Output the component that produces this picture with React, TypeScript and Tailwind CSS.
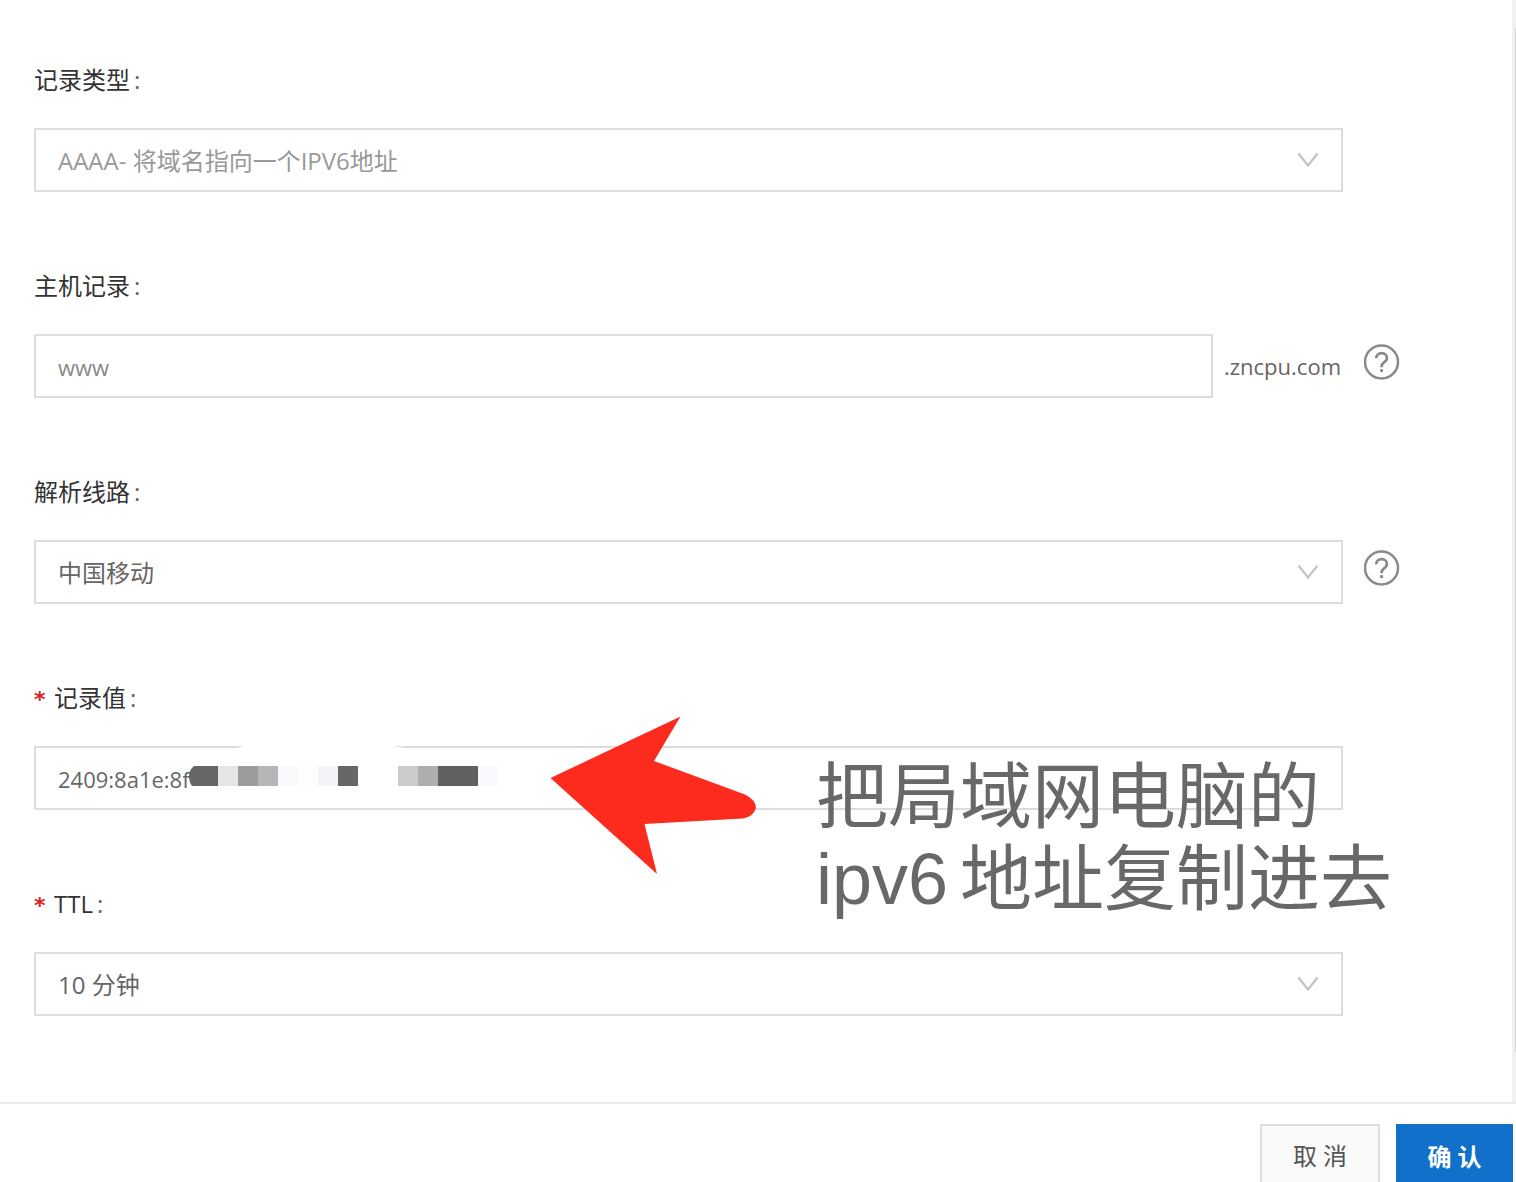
import type { ReactNode } from "react";

const TEXT_FONT = "font-['Open_Sans','Noto_Sans_CJK_SC',sans-serif]";

type FieldProps = {
  id: string;
  label: string;
  required?: boolean;
  help?: boolean;
  children: ReactNode;
};

function HelpButton() {
  return (
    <button type="button" aria-label="帮助" className="mt-[10px] h-9 w-9 text-[#8a8a8a]">
      <svg viewBox="0 0 36 36" fill="none" stroke="currentColor" className="h-9 w-9">
        <circle cx="17.5" cy="18" r="16.5" strokeWidth="2.5" />
        <path d="M12.3 14.2c0-3.2 2.3-5.1 5.3-5.1s5.3 1.9 5.3 4.8c0 2.3-1.3 3.4-2.9 4.5-1.7 1.2-2.4 2-2.4 4.2v.6" strokeWidth="2.7" />
        <path d="M17.6 25.2v2.8" strokeWidth="3" />
      </svg>
    </button>
  );
}

function Field({ id, label, required, help, children }: FieldProps) {
  return (
    <div>
      <label htmlFor={id} className="mb-6 flex h-12 items-center text-2xl text-[#333]">
        {required && (
          <span className="mr-2 w-3 pt-1 font-['DejaVu_Sans',sans-serif] text-[22px] font-bold text-[#e02020]">*</span>
        )}
        <span>{label}</span>
        <span className="ml-1 text-[#666]">:</span>
      </label>
      <div className="relative flex">
        <div className="relative flex min-w-0 flex-1">{children}</div>
        <div className="flex w-[57px] shrink-0 items-start justify-end">{help && <HelpButton />}</div>
      </div>
    </div>
  );
}

function SelectBox({ id, value, disabled }: { id: string; value: string; disabled?: boolean }) {
  return (
    <>
      <select
        id={id}
        disabled={disabled}
        className={`h-16 w-full appearance-none border-2 border-[#dcdcdc] bg-white px-[22px] pt-0.5 text-2xl opacity-100 outline-none ${
          disabled ? "text-[#999]" : "text-[#666]"
        }`}
      >
        <option>{value}</option>
      </select>
      <svg
        viewBox="0 0 22 16"
        fill="none"
        stroke="#c4c4c4"
        strokeWidth="2.2"
        className="pointer-events-none absolute top-6 right-6 h-4 w-[22px]"
      >
        <path d="M1.5 1.5 11 13.5 20.5 1.5" />
      </svg>
    </>
  );
}

// Mosaic cells that hide the rest of the address
const cells = [
  [18, 20, "#656668"],
  [38, 20, "#e4e5e7"],
  [58, 20, "#9b9c9e"],
  [78, 20, "#b5b6b8"],
  [98, 20, "#f9fafd"],
  [118, 20, "#fdfdfe"],
  [138, 20, "#f2f3f6"],
  [158, 20, "#666769"],
  [218, 20, "#cacbcd"],
  [238, 20, "#adaeb0"],
  [258, 40, "#606163"],
  [298, 20, "#f9fafd"],
] as const;

function Mosaic() {
  return (
    <svg viewBox="0 0 330 48" className="pointer-events-none absolute -top-1 left-[146px] h-12 w-[330px]">
      <path d="M54 7Q60 5 66 3H212Q220 6 234 6L232 8H54Z" fill="#fff" />
      <path d="M54 6.500 62 4H54ZM214 4Q222 6 234 6V4Z" fill="#dcdcdc" />
      <path d="M18 24h-4q-5 4-5 10t3 10h6z" fill="#656668" />
      {cells.map(([x, w, fill]) => (
        <rect key={x} x={x} y="24" width={w} height="20" fill={fill} />
      ))}
    </svg>
  );
}

function Annotation() {
  return (
    <>
      <svg
        viewBox="0 0 210 160"
        className="pointer-events-none absolute top-[-30px] left-[514px] h-[160px] w-[210px]"
      >
        <path
          d="M2.5 62 132.5 0.5 106 45 197 78.5Q208 84 208 92 205 101 195 102.5L96.500 108 109 158Z"
          fill="#fc2b1e"
        />
      </svg>
      <p className="pointer-events-none absolute top-2.5 left-[782px] font-['Liberation_Sans','Noto_Sans_CJK_SC',sans-serif] text-[72px] leading-[82px] whitespace-nowrap text-[#686868]">
        把局域网电脑的
        <br />
        ipv6<span className="ml-3">地址复制进去</span>
      </p>
    </>
  );
}

export default function App() {
  return (
    <div className={`flex h-screen flex-col overflow-hidden bg-white ${TEXT_FONT}`}>
      <div className="flex shrink-0">
        <form className="flex flex-1 flex-col gap-[70px] pt-14 pr-28 pb-[86px] pl-[34px]">
          <Field id="type" label="记录类型">
            <SelectBox id="type" value="AAAA- 将域名指向一个IPV6地址" disabled />
          </Field>
          <Field id="host" label="主机记录" help>
            <input
              id="host"
              defaultValue="www"
              className="h-16 min-w-0 flex-1 border-2 border-[#dcdcdc] px-[22px] pt-0.5 text-[22px] text-[#888] outline-none"
            />
            <span className="w-[130px] pt-0.5 pr-0.5 text-right text-[22px] leading-[60px] text-[#666]">
              .zncpu.com
            </span>
          </Field>
          <Field id="line" label="解析线路" help>
            <SelectBox id="line" value="中国移动" />
          </Field>
          <Field id="value" label="记录值" required>
            <input
              id="value"
              defaultValue="2409:8a1e:8f"
              className="h-16 min-w-0 flex-1 border-2 border-[#dcdcdc] px-[22px] pt-0.5 text-[22px] text-[#666] outline-none"
            />
            <Mosaic />
            <Annotation />
          </Field>
          <Field id="ttl" label="TTL" required>
            <SelectBox id="ttl" value="10 分钟" />
          </Field>
        </form>

        {/* Scroll rail */}
        <div className="flex w-1 justify-end bg-[#f1f1f1] pt-7 pb-[50px]">
          <div className="w-px bg-[#d4d4d4]" />
        </div>
      </div>

      <footer className="flex shrink-0 justify-end gap-4 border-t-2 border-[#e8ecef] pt-5 pr-[3px]">
        <button type="button" className="h-16 w-[120px] border-2 border-[#dcdcdc] bg-[#fafafa] text-2xl text-[#555]">
          取 消
        </button>
        <button type="submit" className="h-16 w-[117px] bg-[#1070ca] pt-0.5 text-2xl font-bold text-white">
          确 认
        </button>
      </footer>
    </div>
  );
}
